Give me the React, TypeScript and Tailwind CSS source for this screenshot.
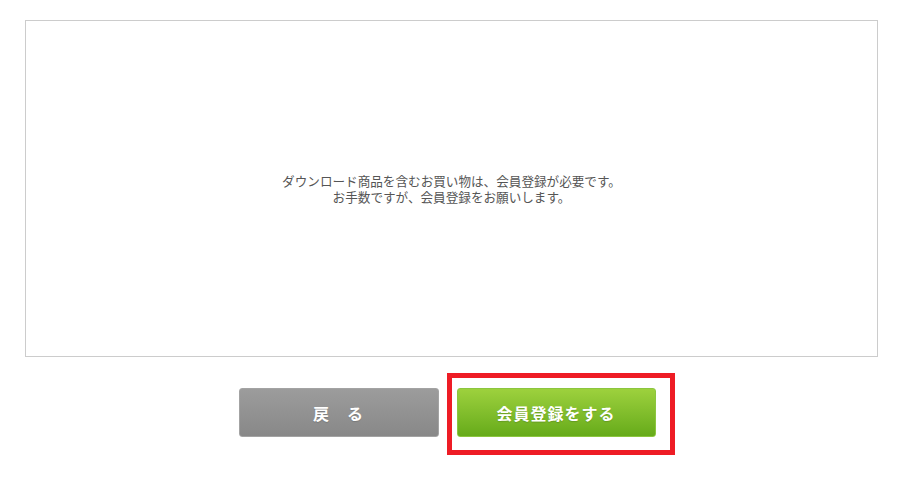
import React from 'react';

const jp = { fontFamily: '"Noto Sans CJK JP", "Noto Sans", sans-serif' };

export default function App() {
  return (
    <div className="w-[903px] h-[477px] bg-white pt-[20px]" style={jp}>
      <div className="mx-[25px] h-[337px] border border-[#cccccc] flex flex-col items-center justify-center text-[12.6px] leading-[16px] text-[#555555] text-center">
        <p>ダウンロード商品を含むお買い物は、会員登録が必要です。</p>
        <p>お手数ですが、会員登録をお願いします。</p>
      </div>

      <div className="flex justify-center items-start pl-[10px] mt-[16px] gap-[8px]">
        <button className="mt-[15px] w-[200px] h-[49px] rounded-[3px] border border-[#a3a3a3] bg-gradient-to-b from-[#9c9c9c] to-[#888888] text-white font-bold text-[16px] tracking-[1px] [text-shadow:0_1px_1px_rgba(0,0,0,0.15)]">
          戻　る
        </button>
        <div className="border-[5px] border-[#ee1c25] pt-[10px] pl-[5px] pr-[14px] pb-[13px]">
          <button className="block w-[199px] h-[49px] rounded-[3px] border border-[#8cc63f] bg-gradient-to-b from-[#9dd13d] to-[#66ab19] text-white font-bold text-[16px] tracking-[1px] [text-shadow:0_1px_1px_rgba(0,0,0,0.15)]">
            会員登録をする
          </button>
        </div>
      </div>
    </div>
  );
}
